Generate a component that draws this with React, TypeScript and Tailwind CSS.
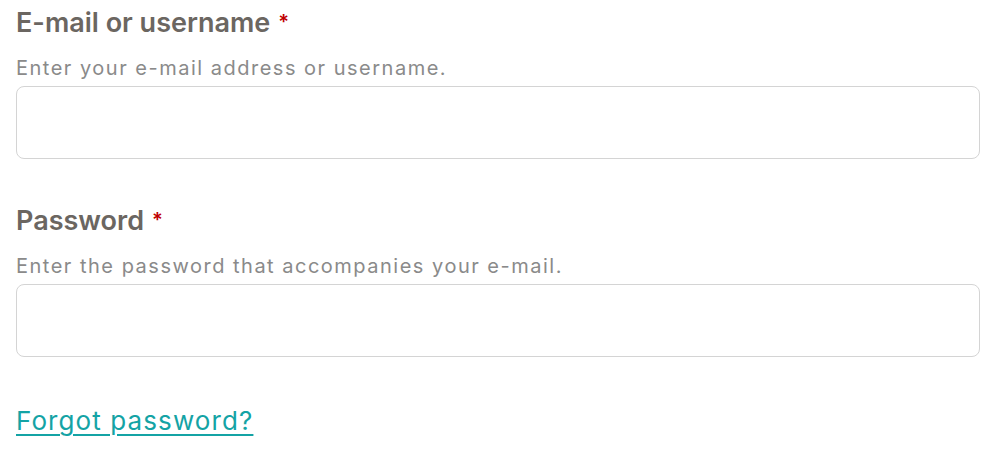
export default function App() {
  const fields = [
    { label: "E-mail or username", hint: "Enter your e-mail address or username.", type: "text" },
    { label: "Password", hint: "Enter the password that accompanies your e-mail.", type: "password" },
  ];

  return (
    <div className="min-h-[450px] bg-white px-4 pt-[6px]" style={{ fontFamily: "Inter, 'Noto Sans', sans-serif" }}>
      <form className="flex flex-col">
        {fields.map((f, i) => (
          <div key={i} className={i === 0 ? "mb-[45px] flex flex-col" : "mb-[44px] flex flex-col"}>
            <label className="flex items-start text-[27px] font-semibold leading-[34px] text-[#6b6661]">
              {f.label}
              <span className="ml-[8px] mt-[4px] text-[20px] leading-[24px] text-[#c00000]">*</span>
            </label>
            <p className="mt-[14px] text-[20px] leading-[28px] tracking-[1.5px] text-[#8a8a8a]">{f.hint}</p>
            <input
              type={f.type}
              className="mt-[4px] h-[73px] w-full rounded-[8px] border border-[#d4d4d4] bg-white px-4 outline-none"
            />
          </div>
        ))}
        <a href="#" className="mt-[3px] self-start text-[26px] leading-[34px] tracking-[1.1px] text-[#14a3a5] underline underline-offset-[4px]">
          Forgot password?
        </a>
      </form>
    </div>
  );
}
